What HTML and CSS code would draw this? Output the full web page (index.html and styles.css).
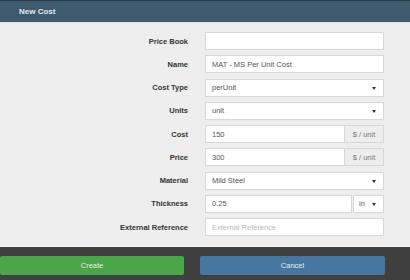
FILE: index.html
```html
<!DOCTYPE html>
<html lang="en">
<head>
    <meta charset="UTF-8">
    <title>New Cost</title>
    <link rel="stylesheet" href="styles.css">
</head>
<body>
    <div class="modal">
        <div class="modal-header">New Cost</div>
        <div class="modal-body">
            <div class="form-row">
                <label>Price Book</label>
                <div class="field"><div class="input"></div></div>
            </div>
            <div class="form-row">
                <label>Name</label>
                <div class="field"><div class="input">MAT - MS Per Unit Cost</div></div>
            </div>
            <div class="form-row">
                <label>Cost Type</label>
                <div class="field"><div class="input select">perUnit<span class="caret"></span></div></div>
            </div>
            <div class="form-row">
                <label>Units</label>
                <div class="field"><div class="input select">unit<span class="caret"></span></div></div>
            </div>
            <div class="form-row">
                <label>Cost</label>
                <div class="field">
                    <div class="input">150</div>
                    <div class="addon">$ / unit</div>
                </div>
            </div>
            <div class="form-row">
                <label>Price</label>
                <div class="field">
                    <div class="input">300</div>
                    <div class="addon">$ / unit</div>
                </div>
            </div>
            <div class="form-row">
                <label>Material</label>
                <div class="field"><div class="input select">Mild Steel<span class="caret"></span></div></div>
            </div>
            <div class="form-row">
                <label>Thickness</label>
                <div class="field">
                    <div class="input">0.25</div>
                    <div class="input unit-select">in<span class="caret"></span></div>
                </div>
            </div>
            <div class="form-row">
                <label>External Reference</label>
                <div class="field"><div class="input placeholder">External Reference</div></div>
            </div>
        </div>
        <div class="modal-footer">
            <button class="btn btn-create">Create</button>
            <button class="btn btn-cancel">Cancel</button>
        </div>
    </div>
</body>
</html>
```

FILE: styles.css
```css
body {
    margin: 0;
    font-family: "Liberation Sans", Arial, sans-serif;
    font-size: 7.5px;
    background-color: #404040;
}
.modal {
    width: 410px;
    height: 280px;
    display: flex;
    flex-direction: column;
}
.modal-header {
    height: 23px;
    box-sizing: border-box;
    border-top: 1px solid #2c3a44;
    border-bottom: 1px solid #e4e8ea;
    background-color: #3e5a6d;
    color: #e3e9ee;
    font-weight: bold;
    font-size: 8px;
    padding-left: 19px;
    display: flex;
    align-items: center;
}
.modal-body {
    height: 224px;
    box-sizing: border-box;
    background-color: #eeeeee;
    border-bottom: 1px solid #f8f8f8;
    padding: 9px 26px 0 0;
}
.form-row {
    display: flex;
    align-items: center;
    height: 18px;
    margin-bottom: 5.25px;
}
.form-row label {
    width: 188px;
    text-align: right;
    font-weight: bold;
    color: #333;
    padding-right: 17px;
}
.field {
    flex: 1;
    display: flex;
    height: 18px;
}
.input {
    flex: 1;
    box-sizing: border-box;
    height: 18px;
    background: white;
    border: 1px solid #d8d8d8;
    color: #555;
    padding-left: 6px;
    display: flex;
    align-items: center;
    position: relative;
}
.input.placeholder {
    color: #bbb;
}
.caret {
    position: absolute;
    right: 7px;
    top: 7px;
    width: 0;
    height: 0;
    border-left: 2.5px solid transparent;
    border-right: 2.5px solid transparent;
    border-top: 3px solid #333;
}
.addon {
    width: 39px;
    box-sizing: border-box;
    height: 18px;
    background: #eeeeee;
    border: 1px solid #d8d8d8;
    border-left: none;
    color: #777;
    display: flex;
    align-items: center;
    justify-content: center;
}
.unit-select {
    flex: 0 0 31px;
    border-left: 1px solid #d8d8d8;
    margin-left: 1px;
    padding-left: 5px;
}
.modal-footer {
    flex: 1;
    display: flex;
    gap: 16px;
    padding-top: 9px;
    box-sizing: border-box;
    background-color: #404040;
}
.btn {
    height: 19px;
    border: none;
    border-radius: 2px;
    font-family: inherit;
    font-size: 7.5px;
    color: #e8efe8;
    padding: 0;
}
.btn-create {
    width: 184px;
    background-color: #4ba549;
}
.btn-cancel {
    width: 185px;
    background-color: #4777a0;
    color: #e3ebf2;
}
```
